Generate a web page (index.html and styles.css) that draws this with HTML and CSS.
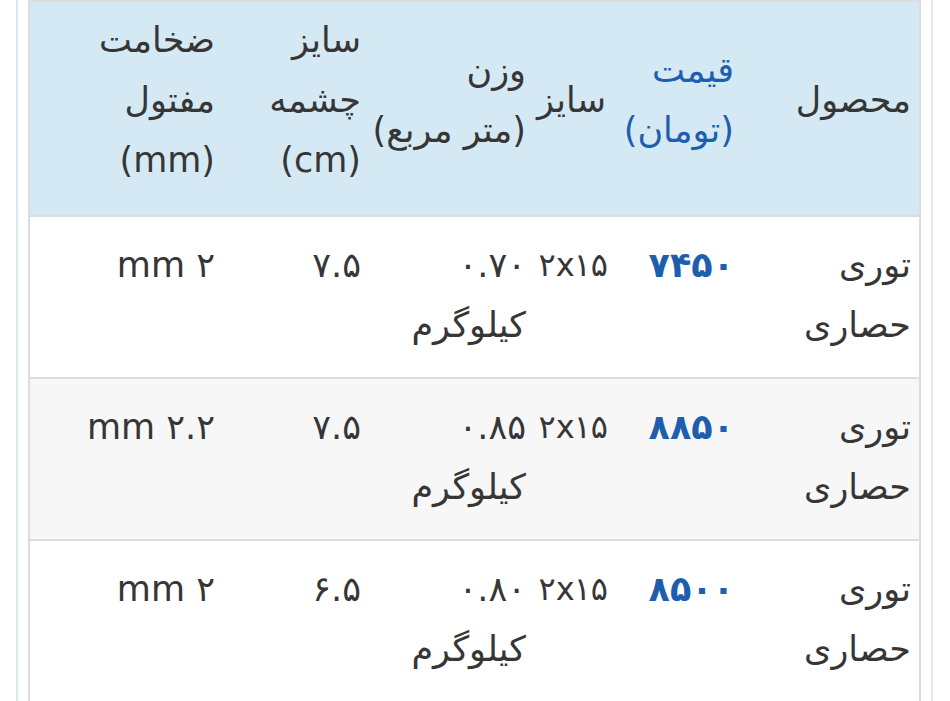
FILE: index.html
```html
<!DOCTYPE html>
<html lang="fa">
<head>
<meta charset="utf-8">
<title>قیمت توری حصاری</title>
<link rel="stylesheet" href="styles.css">
</head>
<body>
<div class="frame">
  <table class="price-table" dir="rtl">
    <colgroup>
      <col class="c-product">
      <col class="c-price">
      <col class="c-size">
      <col class="c-weight">
      <col class="c-mesh">
      <col class="c-wire">
    </colgroup>
    <thead>
      <tr>
        <th>محصول</th>
        <th class="blue">قیمت<br>(تومان)</th>
        <th>سایز</th>
        <th>وزن<br>(متر مربع)</th>
        <th>سایز<br>چشمه<br>(cm)</th>
        <th>ضخامت<br>مفتول<br>(mm)</th>
      </tr>
    </thead>
    <tbody>
      <tr>
        <td>توری<br>حصاری</td>
        <td class="price">۷۴۵۰</td>
        <td class="dim">۲x۱۵</td>
        <td>۰.۷۰<br>کیلوگرم</td>
        <td>۷.۵</td>
        <td>۲ mm</td>
      </tr>
      <tr class="alt">
        <td>توری<br>حصاری</td>
        <td class="price">۸۸۵۰</td>
        <td class="dim">۲x۱۵</td>
        <td>۰.۸۵<br>کیلوگرم</td>
        <td>۷.۵</td>
        <td>۲.۲ mm</td>
      </tr>
      <tr class="last">
        <td>توری<br>حصاری</td>
        <td class="price">۸۵۰۰</td>
        <td class="dim">۲x۱۵</td>
        <td>۰.۸۰<br>کیلوگرم</td>
        <td>۶.۵</td>
        <td>۲ mm</td>
      </tr>
    </tbody>
  </table>
</div>
</body>
</html>
```

FILE: styles.css
```css
html, body {
  margin: 0;
  padding: 0;
  background: #ffffff;
  overflow: hidden;
}

body {
  font-family: "DejaVu Sans", "Noto Sans", sans-serif;
  color: #363636;
}

.frame {
  margin-left: 16px;
  width: 917px;
  box-sizing: border-box;
  border-left: 2px solid #d8e7f1;
  border-right: 2px solid #e8e8e8;
  padding: 0 10px;
  height: 701px;
  overflow: hidden;
}

.price-table {
  width: 893px;
  table-layout: fixed;
  border-collapse: collapse;
  border: 2px solid #dddddd;
  font-size: 35px;
  line-height: 60px;
}

.c-product { width: 178px; }
.c-price { width: 128px; }
.c-size { width: 80px; }
.c-weight { width: 165px; }
.c-mesh { width: 146px; }
.c-wire { width: 194px; }

.price-table th {
  background: #d5e9f5;
  font-weight: normal;
  text-align: right;
  vertical-align: middle;
  padding: 8px 8px 25px 2px;
  border-bottom: 2px solid #dcdcdc;
}

.price-table td {
  text-align: right;
  vertical-align: top;
  padding: 18px 8px 22px 2px;
  border-bottom: 2px solid #dddddd;
  background: #ffffff;
}

.price-table td.dim {
  font-size: 32px;
  letter-spacing: -1px;
  padding-right: 6px;
}

.price-table tr.alt td {
  background: #f7f7f7;
}

.price-table tr.last td {
  padding-bottom: 60px;
}

.blue {
  color: #1d5eae;
}

.price {
  color: #1d5eae;
  font-weight: bold;
}
```
